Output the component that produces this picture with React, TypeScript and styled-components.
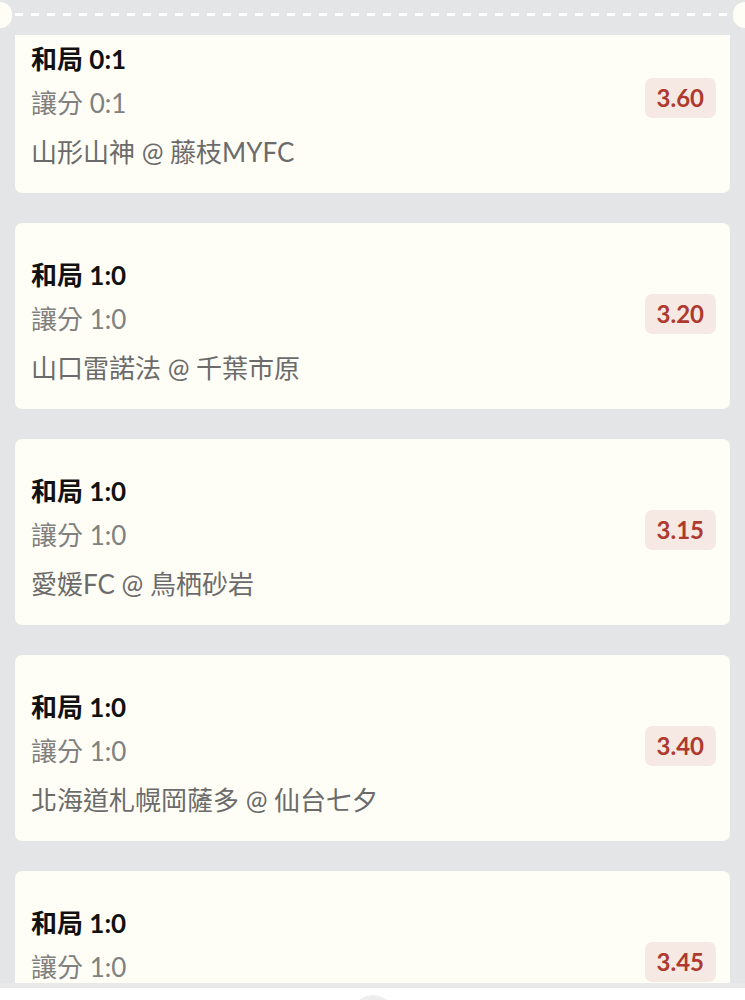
import React from 'react';
import styled, { createGlobalStyle } from 'styled-components';

const GlobalStyle = createGlobalStyle`
  html, body {
    margin: 0;
    padding: 0;
    background: #e4e5e7;
  }
  body {
    font-family: Lato, "Noto Sans CJK TC", sans-serif;
  }
`;

const Page = styled.div`
  width: 745px;
  height: 1000px;
  display: flex;
  flex-direction: column;
  overflow: hidden;
  background: #e4e5e7;
`;

const TicketEdge = styled.div`
  height: 35px;
  flex-shrink: 0;
  display: flex;
  align-items: flex-start;
  gap: 3px;
  padding-top: 2px;
  box-sizing: border-box;
`;

const Notch = styled.div<{ $side: 'left' | 'right' }>`
  width: 12px;
  height: 26px;
  flex-shrink: 0;
  background: #fffef6;
  border-radius: ${(p) => (p.$side === 'left' ? '0 13px 13px 0' : '13px 0 0 13px')};
`;

const DashLine = styled.div`
  flex: 1;
  height: 3px;
  margin-top: 11px;
  background-image: repeating-linear-gradient(
    to right,
    #ffffff 0,
    #ffffff 8px,
    transparent 8px,
    transparent 16px
  );
`;

const List = styled.div`
  flex: 1;
  min-height: 0;
  overflow: hidden;
  display: flex;
  flex-direction: column;
  gap: 30px;
  padding: 0 15px;
`;

const Card = styled.div<{ $clipped?: boolean }>`
  flex-shrink: 0;
  background: #fffef6;
  border-radius: ${(p) => (p.$clipped ? '0 0 7px 7px' : '7px')};
  padding: ${(p) => (p.$clipped ? '8px' : '36px')} 14px 25px 16px;
  font-size: 26px;
  line-height: 32px;
`;

const Title = styled.div`
  font-weight: 700;
  color: #111111;
  margin-bottom: 12px;
`;

const SubRow = styled.div`
  height: 32px;
  display: flex;
  align-items: center;
  justify-content: space-between;
  margin-bottom: 17px;
`;

const Handicap = styled.span`
  color: #808080;
`;

const Odds = styled.span`
  height: 40px;
  margin-top: -10px;
  padding: 0 12px;
  display: flex;
  align-items: center;
  border-radius: 7px;
  background: #f6e9e3;
  color: #ae3a2f;
  font-weight: 700;
  font-size: 24px;
`;

const Teams = styled.div`
  color: #6b6b6b;
`;

const TabBar = styled.div`
  height: 17px;
  flex-shrink: 0;
  border-top: 5px solid #e9e9e9;
  background: #ffffff;
  display: flex;
  justify-content: center;
  box-sizing: border-box;
`;

const TabBubble = styled.div`
  width: 44px;
  height: 44px;
  margin-top: 7px;
  flex-shrink: 0;
  border-radius: 50%;
  background: #eeeeee;
`;

type Bet = { pick: string; handicap: string; odds: string; home: string; away: string };

const bets: Bet[] = [
  { pick: '和局 0:1', handicap: '讓分 0:1', odds: '3.60', home: '山形山神', away: '藤枝MYFC' },
  { pick: '和局 1:0', handicap: '讓分 1:0', odds: '3.20', home: '山口雷諾法', away: '千葉市原' },
  { pick: '和局 1:0', handicap: '讓分 1:0', odds: '3.15', home: '愛媛FC', away: '鳥栖砂岩' },
  { pick: '和局 1:0', handicap: '讓分 1:0', odds: '3.40', home: '北海道札幌岡薩多', away: '仙台七夕' },
  { pick: '和局 1:0', handicap: '讓分 1:0', odds: '3.45', home: '長崎成功丸', away: '大分三神' },
];

export default function App() {
  return (
    <>
      <GlobalStyle />
      <Page>
        <TicketEdge>
          <Notch $side="left" />
          <DashLine />
          <Notch $side="right" />
        </TicketEdge>
        <List>
          {bets.map((b, i) => (
            <Card key={i} $clipped={i === 0}>
              <Title>{b.pick}</Title>
              <SubRow>
                <Handicap>{b.handicap}</Handicap>
                <Odds>{b.odds}</Odds>
              </SubRow>
              <Teams>
                {b.home} @ {b.away}
              </Teams>
            </Card>
          ))}
        </List>
        <TabBar>
          <TabBubble />
        </TabBar>
      </Page>
    </>
  );
}
